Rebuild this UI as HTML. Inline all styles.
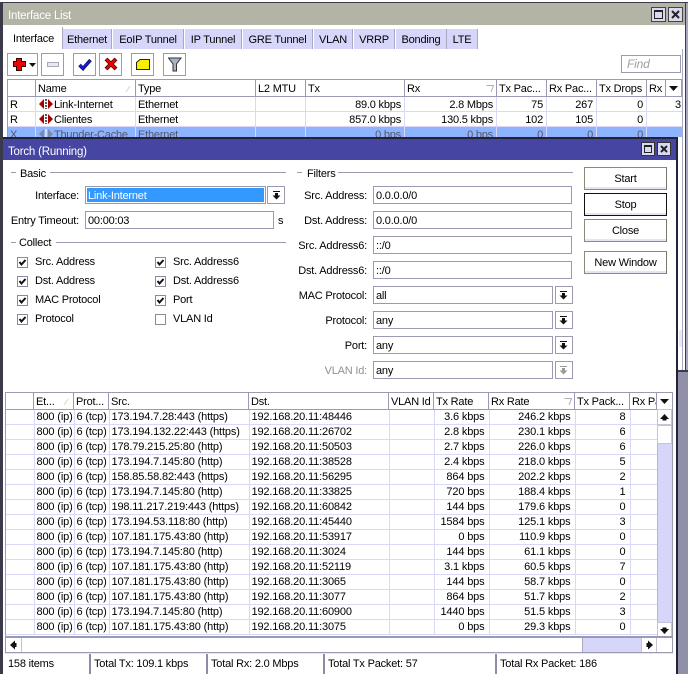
<!DOCTYPE html>
<html><head><meta charset="utf-8"><style>
html,body{margin:0;padding:0;background:#fff}
#p{position:relative;width:688px;height:674px;overflow:hidden;background:#fff;font:11px "Liberation Sans",sans-serif;color:#000;letter-spacing:-.2px}
#p div,#p svg,#p span.a{position:absolute}
.t{white-space:nowrap;line-height:14px;height:14px}
.r{text-align:right}
.tab{top:29px;height:20px;background:#d6d6fa;line-height:22px;text-align:center;border-right:1px solid #a8a8c0;box-sizing:border-box}
.bt{top:53px;height:23px;background:#fff;border:1px solid #9a9ab2;box-sizing:border-box}
.f{height:18px;border:1px solid #9a9ab2;box-sizing:border-box;background:#fff;line-height:18px;padding-left:2px;white-space:nowrap}
.ab{width:18px;height:18px;border:1px solid #9a9ab2;box-sizing:border-box;background:#fff}
.lb{width:80px;text-align:right;line-height:14px;white-space:nowrap}
.ln{height:1px;background:#9a9ab2}
.cb{width:11px;height:11px;border:1px solid #8a8a9a;box-sizing:border-box;background:#fff}
.btn{left:584px;width:83px;height:23px;border:1px solid #8a8a78;border-right-color:#77776a;box-sizing:border-box;background:#fff;text-align:center;line-height:22px;box-shadow:inset 0 -2px 0 #e4e4f4}
table{position:absolute;border-collapse:collapse;table-layout:fixed;font:11px "Liberation Sans",sans-serif;letter-spacing:-.15px}
td{padding:1px 2px 0;height:13px;line-height:13px;border-right:1px solid #d8d8f8;border-bottom:1px solid #d8d8f8;white-space:nowrap;overflow:hidden}
td.n{text-align:right;padding-right:4px}
.hd{height:16px;top:393px;line-height:18px;border-right:1px solid #9a9ab2;box-sizing:border-box;padding-left:2px;white-space:nowrap;overflow:hidden}
.hu{height:17px;top:80px;line-height:19px;border-right:1px solid #9a9ab2;box-sizing:border-box;padding-left:2px;white-space:nowrap;overflow:hidden}
.st{top:654px;height:20px;line-height:20px;border-right:2px solid #8c8ca4;box-sizing:border-box;padding-left:3px;white-space:nowrap}
</style></head><body><div id="p">

<!-- Interface list window -->
<div style="left:0;top:2px;width:688px;height:370px;background:#fff"></div>
<div style="left:0;top:2px;width:688px;height:1px;background:#3a3a4a"></div>
<div style="left:0;top:2px;width:3px;height:672px;background:#3a3a4a"></div>
<div style="left:685px;top:2px;width:1px;height:370px;background:#3a3a4a"></div>
<div style="left:686px;top:3px;width:2px;height:369px;background:#a8a8c0"></div>
<div style="left:3px;top:3px;width:682px;height:22px;background:#b4b4a6"></div>
<div class="t" style="left:8px;top:9px;color:#fff;font-size:11.5px">Interface List</div>
<div class="bt" style="left:651px;top:7px;width:15px;height:15px;border-color:#444;background:#d8d8f0"></div>
<div style="left:654px;top:10px;width:9px;height:9px;border:1px solid #222;border-top-width:2px;box-sizing:border-box"></div>
<div class="bt" style="left:668px;top:7px;width:15px;height:15px;border-color:#444;background:#d8d8f0"></div>
<svg style="left:671px;top:10px" width="9" height="9"><path d="M1 1L8 8M8 1L1 8" stroke="#222" stroke-width="2"/></svg>

<!-- tabs -->
<div class="t" style="left:13px;top:32px">Interface</div>
<div style="left:62px;top:27px;width:1px;height:22px;background:#a8a8c0"></div>
<div class="tab" style="left:63px;width:49px">Ethernet</div>
<div class="tab" style="left:113px;width:71px">EoIP Tunnel</div>
<div class="tab" style="left:185px;width:57px">IP Tunnel</div>
<div class="tab" style="left:243px;width:70px">GRE Tunnel</div>
<div class="tab" style="left:314px;width:39px">VLAN</div>
<div class="tab" style="left:354px;width:41px">VRRP</div>
<div class="tab" style="left:396px;width:51px">Bonding</div>
<div class="tab" style="left:447px;width:31px">LTE</div>

<!-- toolbar -->
<div class="bt" style="left:7px;width:31px"></div>
<svg style="left:12px;top:57px" width="24" height="15"><path d="M7 1V14M1 7H14" stroke="#300" stroke-width="6"/><path d="M7 2V13M2 7H13" stroke="#f00000" stroke-width="4"/><path d="M17 6H24L20.500 10Z" fill="#111"/></svg>
<div class="bt" style="left:41px;width:23px"></div>
<div style="left:47px;top:62px;width:12px;height:5px;border:1px solid #a8a8b8;box-sizing:border-box;background:#e8e8f0"></div>
<div class="bt" style="left:73px;width:23px"></div>
<svg style="left:78px;top:57px" width="14" height="14"><path d="M1.500 8L5 11.500L12.500 3" fill="none" stroke="#101060" stroke-width="3.500"/><path d="M2 8L5 11L12 3.500" fill="none" stroke="#1818e0" stroke-width="2"/></svg>
<div class="bt" style="left:99px;width:23px"></div>
<svg style="left:104px;top:57px" width="14" height="14"><path d="M2 2L12 12M12 2L2 12" stroke="#400" stroke-width="4"/><path d="M2.500 2.500L11.500 11.500M11.500 2.500L2.500 11.500" stroke="#f00000" stroke-width="2.500"/></svg>
<div class="bt" style="left:131px;width:23px"></div>
<svg style="left:136px;top:58px" width="14" height="13"><path d="M.5 11.500V4.500L4 1.500H13.500V11.500Z" fill="#f8f000" stroke="#222"/></svg>
<div class="bt" style="left:163px;width:23px"></div>
<svg style="left:168px;top:57px" width="14" height="15"><path d="M.5 1H13L8.500 7V14H5V7Z" fill="#a8b4c4" stroke="#333"/></svg>
<div class="f" style="left:621px;top:55px;width:60px;color:#a0a0a0;font-style:italic;font-size:12px;padding-left:5px;line-height:17px">Find</div>
<div style="left:682px;top:49px;width:1px;height:322px;background:#a8a8c0"></div>

<!-- interface table -->
<div style="left:7px;top:79px;width:675px;height:1px;background:#9a9ab2"></div>
<div style="left:7px;top:96px;width:675px;height:1px;background:#9a9ab2"></div>
<div style="left:7px;top:80px;width:1px;height:57px;background:#9a9ab2"></div>
<div class="hu" style="left:8px;width:28px"></div>
<div class="hu" style="left:36px;width:100px">Name</div>
<div class="hu" style="left:136px;width:120px">Type</div>
<div class="hu" style="left:256px;width:50px">L2 MTU</div>
<div class="hu" style="left:306px;width:99px">Tx</div>
<div class="hu" style="left:405px;width:92px">Rx</div>
<div class="hu" style="left:497px;width:50px">Tx Pac...</div>
<div class="hu" style="left:547px;width:50px">Rx Pac...</div>
<div class="hu" style="left:597px;width:50px">Tx Drops</div>
<div class="hu" style="left:647px;width:19px">Rx</div>
<div class="hu" style="left:666px;width:16px"></div>
<svg style="left:669px;top:85px" width="10" height="7"><path d="M0 1H9L4.500 6Z" fill="#111"/></svg>
<svg style="left:125px;top:85px" width="6" height="8"><path d="M1 7L5 1" stroke="#d8d8c0"/></svg>
<svg style="left:486px;top:85px" width="8" height="8"><path d="M.5 .5H7.500L5 7" fill="none" stroke="#b0b0b0"/></svg>

<div style="left:8px;top:127px;width:674px;height:10px;background:#8fb4ff"></div>
<div style="left:8px;top:111px;width:674px;height:1px;background:#d8d8f8"></div>
<div style="left:8px;top:126px;width:674px;height:1px;background:#d8d8f8"></div>
<div style="left:35px;top:97px;width:1px;height:40px;background:#d8d8f8"></div>
<div style="left:135px;top:97px;width:1px;height:40px;background:#d8d8f8"></div>
<div style="left:255px;top:97px;width:1px;height:40px;background:#d8d8f8"></div>
<div style="left:305px;top:97px;width:1px;height:40px;background:#d8d8f8"></div>
<div style="left:404px;top:97px;width:1px;height:40px;background:#d8d8f8"></div>
<div style="left:496px;top:97px;width:1px;height:40px;background:#d8d8f8"></div>
<div style="left:546px;top:97px;width:1px;height:40px;background:#d8d8f8"></div>
<div style="left:596px;top:97px;width:1px;height:40px;background:#d8d8f8"></div>
<div style="left:646px;top:97px;width:1px;height:40px;background:#d8d8f8"></div>

<div class="t" style="left:10px;top:98px">R</div>
<svg style="left:39px;top:99px" width="15" height="10"><path d="M0 5L5 0V10ZM14 5L9 0V10Z" fill="#a80000"/><path d="M7 0V10" stroke="#222" stroke-dasharray="2 1" stroke-width="1.500"/></svg>
<div class="t" style="left:54px;top:98px">Link-Internet</div>
<div class="t" style="left:138px;top:98px">Ethernet</div>
<div class="t r" style="left:306px;top:98px;width:95px">89.0 kbps</div>
<div class="t r" style="left:405px;top:98px;width:88px">2.8 Mbps</div>
<div class="t r" style="left:497px;top:98px;width:46px">75</div>
<div class="t r" style="left:547px;top:98px;width:46px">267</div>
<div class="t r" style="left:597px;top:98px;width:46px">0</div>
<div class="t" style="left:675px;top:98px">3</div>

<div class="t" style="left:10px;top:113px">R</div>
<svg style="left:39px;top:114px" width="15" height="10"><path d="M0 5L5 0V10ZM14 5L9 0V10Z" fill="#a80000"/><path d="M7 0V10" stroke="#222" stroke-dasharray="2 1" stroke-width="1.500"/></svg>
<div class="t" style="left:54px;top:113px">Clientes</div>
<div class="t" style="left:138px;top:113px">Ethernet</div>
<div class="t r" style="left:306px;top:113px;width:95px">857.0 kbps</div>
<div class="t r" style="left:405px;top:113px;width:88px">130.5 kbps</div>
<div class="t r" style="left:497px;top:113px;width:46px">102</div>
<div class="t r" style="left:547px;top:113px;width:46px">105</div>
<div class="t r" style="left:597px;top:113px;width:46px">0</div>

<div class="t" style="left:10px;top:128px;color:#556">X</div>
<svg style="left:39px;top:129px" width="15" height="10"><path d="M0 5L5 0V10ZM14 5L9 0V10Z" fill="#7a8aa8"/><path d="M7 0V10" stroke="#e0e8ff" stroke-width="1.500"/></svg>
<div class="t" style="left:54px;top:128px;color:#556">Thunder-Cache</div>
<div class="t" style="left:138px;top:128px;color:#556">Ethernet</div>
<div class="t r" style="left:306px;top:128px;width:95px;color:#556">0 bps</div>
<div class="t r" style="left:405px;top:128px;width:88px;color:#556">0 bps</div>
<div class="t r" style="left:497px;top:128px;width:46px;color:#556">0</div>
<div class="t r" style="left:547px;top:128px;width:46px;color:#556">0</div>
<div class="t r" style="left:597px;top:128px;width:46px;color:#556">0</div>

<!-- lower right background -->
<div style="left:678px;top:370px;width:10px;height:304px;background:#9090a8"></div>
<div style="left:678px;top:370px;width:10px;height:2px;background:#3a3a4a"></div>
<div style="left:679px;top:330px;width:3px;height:17px;background:#e8e8fc"></div>

<!-- Torch window -->
<div style="left:3px;top:137px;width:675px;height:537px;background:#fff"></div>
<div style="left:3px;top:137px;width:675px;height:2px;background:#22223a"></div>
<div style="left:676px;top:137px;width:2px;height:537px;background:#22223a"></div>
<div style="left:3px;top:139px;width:673px;height:21px;background:#4646a2"></div>
<div class="t" style="left:8px;top:145px;color:#fff;font-size:11.5px">Torch (Running)</div>
<div style="left:641px;top:142px;width:14px;height:14px;border:1px solid #333;box-sizing:border-box;background:#d8d8f0"></div>
<div style="left:644px;top:145px;width:8px;height:8px;border:1px solid #222;border-top-width:2px;box-sizing:border-box"></div>
<div style="left:657px;top:142px;width:14px;height:14px;border:1px solid #333;box-sizing:border-box;background:#d8d8f0"></div>
<svg style="left:660px;top:145px" width="8" height="8"><path d="M1 1L7 7M7 1L1 7" stroke="#222" stroke-width="2"/></svg>

<!-- Basic -->
<div class="ln" style="left:11px;top:172px;width:5px"></div>
<div class="t" style="left:20px;top:167px">Basic</div>
<div class="ln" style="left:50px;top:172px;width:236px"></div>
<div class="lb" style="left:0;top:189px;width:79px">Interface:</div>
<div class="f" style="left:85px;top:186px;width:181px;padding:1px;color:#fff"><span style="display:block;background:#3399ff;height:14px;line-height:16px;padding-left:1px">Link-Internet</span></div>
<div class="ab" style="left:267px;top:186px"></div>
<svg style="left:272px;top:191px" width="9" height="9"><path d="M1 0.500H8" stroke="#111"/><path d="M3 2H6V4.500H8.500L4.500 8.500L.5 4.500H3Z" fill="#111"/></svg>
<div class="lb" style="left:0;top:214px;width:79px">Entry Timeout:</div>
<div class="f" style="left:85px;top:211px;width:189px">00:00:03</div>
<div class="t" style="left:278px;top:214px">s</div>

<!-- Collect -->
<div class="ln" style="left:11px;top:242px;width:5px"></div>
<div class="t" style="left:19px;top:236px">Collect</div>
<div class="ln" style="left:56px;top:242px;width:230px"></div>
<div class="cb" style="left:17px;top:257px"></div><div class="t" style="left:35px;top:255px">Src. Address</div>
<div class="cb" style="left:17px;top:276px"></div><div class="t" style="left:35px;top:274px">Dst. Address</div>
<div class="cb" style="left:17px;top:295px"></div><div class="t" style="left:35px;top:293px">MAC Protocol</div>
<div class="cb" style="left:17px;top:314px"></div><div class="t" style="left:35px;top:312px">Protocol</div>
<div class="cb" style="left:155px;top:257px"></div><div class="t" style="left:173px;top:255px">Src. Address6</div>
<div class="cb" style="left:155px;top:276px"></div><div class="t" style="left:173px;top:274px">Dst. Address6</div>
<div class="cb" style="left:155px;top:295px"></div><div class="t" style="left:173px;top:293px">Port</div>
<div class="cb" style="left:155px;top:314px"></div><div class="t" style="left:173px;top:312px">VLAN Id</div>
<svg style="left:17px;top:257px" width="150" height="50"><g fill="none" stroke="#111" stroke-width="2"><path d="M2.500 5L4.500 7.500L8.500 3"/><path d="M2.500 24L4.500 26.500L8.500 22"/><path d="M2.500 43L4.500 45.500L8.500 41"/><path d="M140.500 5L142.500 7.500L146.500 3"/><path d="M140.500 24L142.500 26.500L146.500 22"/><path d="M140.500 43L142.500 45.500L146.500 41"/></g></svg>
<svg style="left:17px;top:314px" width="11" height="11"><path d="M2.500 5L4.500 7.500L8.500 3" fill="none" stroke="#111" stroke-width="2"/></svg>

<!-- Filters -->
<div class="ln" style="left:297px;top:172px;width:5px"></div>
<div class="t" style="left:307px;top:167px">Filters</div>
<div class="ln" style="left:338px;top:172px;width:235px"></div>
<div class="lb" style="left:287px;top:189px">Src. Address:</div><div class="f" style="left:373px;top:186px;width:199px">0.0.0.0/0</div>
<div class="lb" style="left:287px;top:214px">Dst. Address:</div><div class="f" style="left:373px;top:211px;width:199px">0.0.0.0/0</div>
<div class="lb" style="left:287px;top:239px">Src. Address6:</div><div class="f" style="left:373px;top:236px;width:199px">::/0</div>
<div class="lb" style="left:287px;top:264px">Dst. Address6:</div><div class="f" style="left:373px;top:261px;width:199px">::/0</div>
<div class="lb" style="left:287px;top:289px">MAC Protocol:</div><div class="f" style="left:373px;top:286px;width:180px">all</div>
<div class="lb" style="left:287px;top:314px">Protocol:</div><div class="f" style="left:373px;top:311px;width:180px">any</div>
<div class="lb" style="left:287px;top:339px">Port:</div><div class="f" style="left:373px;top:336px;width:180px">any</div>
<div class="lb" style="left:287px;top:364px;color:#909090">VLAN Id:</div><div class="f" style="left:373px;top:361px;width:180px">any</div>
<div class="ab" style="left:555px;top:286px"></div><svg style="left:559px;top:291px" width="9" height="9"><path d="M1 0.500H8" stroke="#111"/><path d="M3 2H6V4.500H8.500L4.500 8.500L.5 4.500H3Z" fill="#111"/></svg>
<div class="ab" style="left:555px;top:311px"></div><svg style="left:559px;top:316px" width="9" height="9"><path d="M1 0.500H8" stroke="#111"/><path d="M3 2H6V4.500H8.500L4.500 8.500L.5 4.500H3Z" fill="#111"/></svg>
<div class="ab" style="left:555px;top:336px"></div><svg style="left:559px;top:341px" width="9" height="9"><path d="M1 0.500H8" stroke="#111"/><path d="M3 2H6V4.500H8.500L4.500 8.500L.5 4.500H3Z" fill="#111"/></svg>
<div class="ab" style="left:555px;top:361px"></div><svg style="left:559px;top:366px" width="9" height="9"><path d="M1 0.500H8" stroke="#999"/><path d="M3 2H6V4.500H8.500L4.500 8.500L.5 4.500H3Z" fill="#999"/></svg>

<!-- buttons -->
<div class="btn" style="top:167px">Start</div>
<div class="btn" style="top:193px;border-color:#111">Stop</div>
<div class="btn" style="top:219px">Close</div>
<div class="btn" style="top:251px">New Window</div>

<!-- torch table -->
<div style="left:5px;top:392px;width:668px;height:1px;background:#9a9ab2"></div>
<div style="left:5px;top:409px;width:652px;height:1px;background:#9a9ab2"></div>
<div style="left:5px;top:393px;width:1px;height:260px;background:#9a9ab2"></div>
<div style="left:672px;top:393px;width:1px;height:260px;background:#9a9ab2"></div>
<div class="hd" style="left:6px;width:28px"></div>
<div class="hd" style="left:34px;width:40px">Et...</div>
<div class="hd" style="left:74px;width:35px">Prot...</div>
<div class="hd" style="left:109px;width:140px">Src.</div>
<div class="hd" style="left:249px;width:140px">Dst.</div>
<div class="hd" style="left:389px;width:45px">VLAN Id</div>
<div class="hd" style="left:434px;width:55px">Tx Rate</div>
<div class="hd" style="left:489px;width:86px">Rx Rate</div>
<div class="hd" style="left:575px;width:55px">Tx Pack...</div>
<div class="hd" style="left:630px;width:27px">Rx Pa</div>
<div class="hd" style="left:657px;width:15px;padding:0;border-right:0;background:#fff"></div>
<svg style="left:660px;top:398px" width="10" height="7"><path d="M0 1H9L4.500 6Z" fill="#111"/></svg>
<svg style="left:63px;top:398px" width="6" height="8"><path d="M1 7L5 1" stroke="#d8d8c0"/></svg>
<svg style="left:564px;top:398px" width="8" height="8"><path d="M.5 .5H7.500L5 7" fill="none" stroke="#b0b0b0"/></svg>

<table style="left:6px;top:410px;width:651px">
<colgroup><col style="width:28px"><col style="width:40px"><col style="width:35px"><col style="width:140px"><col style="width:140px"><col style="width:45px"><col style="width:55px"><col style="width:86px"><col style="width:55px"><col style="width:27px"></colgroup>
<tr><td></td><td>800 (ip)</td><td>6 (tcp)</td><td>173.194.7.28:443 (https)</td><td>192.168.20.11:48446</td><td></td><td class="n">3.6 kbps</td><td class="n">246.2 kbps</td><td class="n">8</td><td></td></tr>
<tr><td></td><td>800 (ip)</td><td>6 (tcp)</td><td>173.194.132.22:443 (https)</td><td>192.168.20.11:26702</td><td></td><td class="n">2.8 kbps</td><td class="n">230.1 kbps</td><td class="n">6</td><td></td></tr>
<tr><td></td><td>800 (ip)</td><td>6 (tcp)</td><td>178.79.215.25:80 (http)</td><td>192.168.20.11:50503</td><td></td><td class="n">2.7 kbps</td><td class="n">226.0 kbps</td><td class="n">6</td><td></td></tr>
<tr><td></td><td>800 (ip)</td><td>6 (tcp)</td><td>173.194.7.145:80 (http)</td><td>192.168.20.11:38528</td><td></td><td class="n">2.4 kbps</td><td class="n">218.0 kbps</td><td class="n">5</td><td></td></tr>
<tr><td></td><td>800 (ip)</td><td>6 (tcp)</td><td>158.85.58.82:443 (https)</td><td>192.168.20.11:56295</td><td></td><td class="n">864 bps</td><td class="n">202.2 kbps</td><td class="n">2</td><td></td></tr>
<tr><td></td><td>800 (ip)</td><td>6 (tcp)</td><td>173.194.7.145:80 (http)</td><td>192.168.20.11:33825</td><td></td><td class="n">720 bps</td><td class="n">188.4 kbps</td><td class="n">1</td><td></td></tr>
<tr><td></td><td>800 (ip)</td><td>6 (tcp)</td><td>198.11.217.219:443 (https)</td><td>192.168.20.11:60842</td><td></td><td class="n">144 bps</td><td class="n">179.6 kbps</td><td class="n">0</td><td></td></tr>
<tr><td></td><td>800 (ip)</td><td>6 (tcp)</td><td>173.194.53.118:80 (http)</td><td>192.168.20.11:45440</td><td></td><td class="n">1584 bps</td><td class="n">125.1 kbps</td><td class="n">3</td><td></td></tr>
<tr><td></td><td>800 (ip)</td><td>6 (tcp)</td><td>107.181.175.43:80 (http)</td><td>192.168.20.11:53917</td><td></td><td class="n">0 bps</td><td class="n">110.9 kbps</td><td class="n">0</td><td></td></tr>
<tr><td></td><td>800 (ip)</td><td>6 (tcp)</td><td>173.194.7.145:80 (http)</td><td>192.168.20.11:3024</td><td></td><td class="n">144 bps</td><td class="n">61.1 kbps</td><td class="n">0</td><td></td></tr>
<tr><td></td><td>800 (ip)</td><td>6 (tcp)</td><td>107.181.175.43:80 (http)</td><td>192.168.20.11:52119</td><td></td><td class="n">3.1 kbps</td><td class="n">60.5 kbps</td><td class="n">7</td><td></td></tr>
<tr><td></td><td>800 (ip)</td><td>6 (tcp)</td><td>107.181.175.43:80 (http)</td><td>192.168.20.11:3065</td><td></td><td class="n">144 bps</td><td class="n">58.7 kbps</td><td class="n">0</td><td></td></tr>
<tr><td></td><td>800 (ip)</td><td>6 (tcp)</td><td>107.181.175.43:80 (http)</td><td>192.168.20.11:3077</td><td></td><td class="n">864 bps</td><td class="n">51.7 kbps</td><td class="n">2</td><td></td></tr>
<tr><td></td><td>800 (ip)</td><td>6 (tcp)</td><td>173.194.7.145:80 (http)</td><td>192.168.20.11:60900</td><td></td><td class="n">1440 bps</td><td class="n">51.5 kbps</td><td class="n">3</td><td></td></tr>
<tr><td></td><td>800 (ip)</td><td>6 (tcp)</td><td>107.181.175.43:80 (http)</td><td>192.168.20.11:3075</td><td></td><td class="n">0 bps</td><td class="n">29.3 kbps</td><td class="n">0</td><td></td></tr>
</table>

<!-- v scrollbar -->
<div style="left:657px;top:409px;width:15px;height:228px;background:#d6d6fa;border-left:1px solid #b8b8cc;box-sizing:border-box"></div>
<div style="left:657px;top:409px;width:15px;height:16px;background:#fff;border:1px solid #c4c4d8;box-sizing:border-box"></div>
<svg style="left:660px;top:413px" width="10" height="9"><path d="M4.500 1L9 6H6.500V7.500H2.500V6H0Z" fill="#111"/></svg>
<div style="left:657px;top:425px;width:15px;height:19px;background:#fff;border:1px solid #c4c4d8;box-sizing:border-box"></div>
<div style="left:657px;top:622px;width:15px;height:15px;background:#fff;border:1px solid #c4c4d8;box-sizing:border-box"></div>
<svg style="left:660px;top:626px" width="10" height="9"><path d="M4.500 8L9 3H6.500V1.500H2.500V3H0Z" fill="#111"/></svg>

<!-- h scrollbar -->
<div style="left:5px;top:636px;width:668px;height:2px;background:#9a9ab2"></div>
<div style="left:6px;top:638px;width:666px;height:14px;background:#fff"></div>
<div style="left:21px;top:638px;width:1px;height:14px;background:#c4c4d8"></div>
<svg style="left:9px;top:640px" width="9" height="10"><path d="M1 5L6 .5V3H7.500V7H6V9.500Z" fill="#111"/></svg>
<div style="left:582px;top:638px;width:59px;height:14px;background:#d6d6fa;border-left:1px solid #a8a8c0;box-sizing:border-box"></div>
<div style="left:641px;top:638px;width:1px;height:14px;background:#c4c4d8"></div>
<div style="left:656px;top:638px;width:1px;height:14px;background:#c4c4d8"></div>
<svg style="left:645px;top:640px" width="9" height="10"><path d="M8 5L3 .5V3H1.500V7H3V9.500Z" fill="#111"/></svg>
<div style="left:5px;top:652px;width:668px;height:1px;background:#9a9ab2"></div>

<!-- status -->
<div style="left:5px;top:653px;width:668px;height:1px;background:#e4e4f4"></div>
<div class="st" style="left:5px;width:86px">158 items</div>
<div class="st" style="left:91px;width:117px">Total Tx: 109.1 kbps</div>
<div class="st" style="left:208px;width:117px">Total Rx: 2.0 Mbps</div>
<div class="st" style="left:325px;width:172px">Total Tx Packet: 57</div>
<div class="st" style="left:497px;width:176px;border-right:0">Total Rx Packet: 186</div>
</div></body></html>
